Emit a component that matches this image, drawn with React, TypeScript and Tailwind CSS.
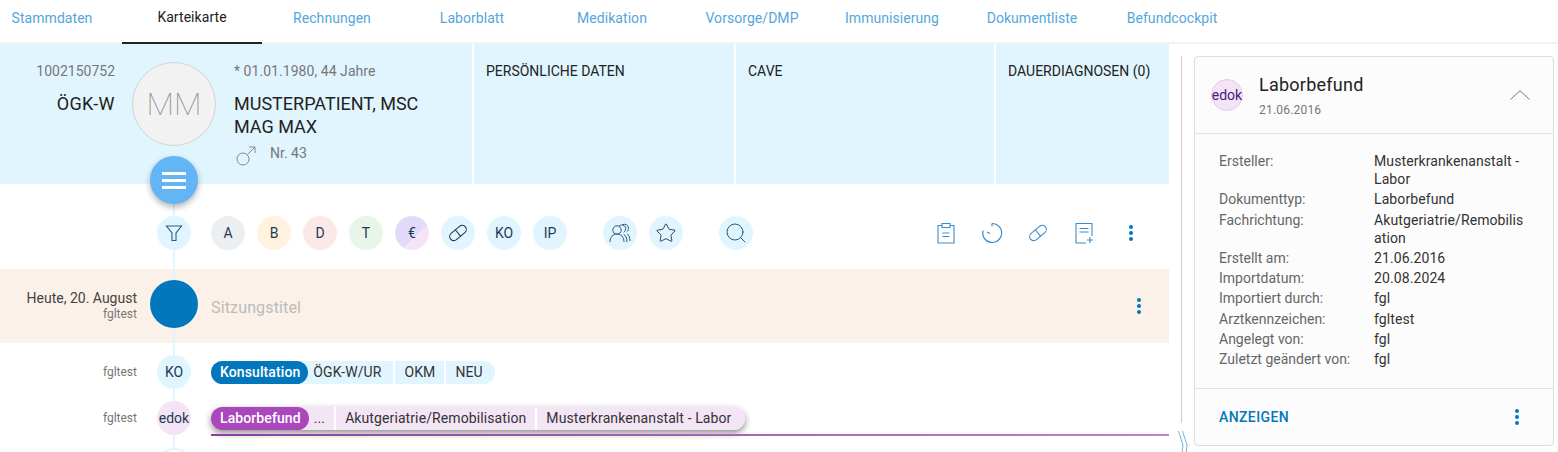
import { Search, Star } from 'lucide-react'

const tabs = ['Stammdaten', 'Karteikarte', 'Rechnungen', 'Laborblatt', 'Medikation', 'Vorsorge/DMP', 'Immunisierung', 'Dokumentliste', 'Befundcockpit']

const details = [
  { label: 'Ersteller:', value: 'Musterkrankenanstalt - Labor' },
  { label: 'Dokumenttyp:', value: 'Laborbefund' },
  { label: 'Fachrichtung:', value: 'Akutgeriatrie/Remobilisation' },
  { label: 'Erstellt am:', value: '21.06.2016' },
  { label: 'Importdatum:', value: '20.08.2024' },
  { label: 'Importiert durch:', value: 'fgl' },
  { label: 'Arztkennzeichen:', value: 'fgltest' },
  { label: 'Angelegt von:', value: 'fgl' },
  { label: 'Zuletzt geändert von:', value: 'fgl' },
]

function Pill({ className = '' }: { className?: string }) {
  return (
    <svg viewBox="0 0 24 24" fill="none" stroke="currentColor" strokeWidth="1.2" className={className}>
      <rect x="1.5" y="7.5" width="21" height="9" rx="4.5" transform="rotate(-40 12 12)" />
      <path d="M8.8 8.2l6.2 7.4" />
    </svg>
  )
}

function Dots() {
  return (
    <div className="flex flex-col items-center gap-[2px]">
      <span className="h-[4px] w-[4px] rounded-full bg-[#0277bd]" />
      <span className="h-[4px] w-[4px] rounded-full bg-[#0277bd]" />
      <span className="h-[4px] w-[4px] rounded-full bg-[#0277bd]" />
    </div>
  )
}

function Circle({ children, className = 'bg-[#e1f5fe]' }: { children?: React.ReactNode; className?: string }) {
  return (
    <div className={`relative z-[2] flex h-[34px] w-[34px] shrink-0 items-center justify-center rounded-full text-[14px] text-[#1d3a55] ${className}`}>
      {children}
    </div>
  )
}

function Chip({ children, className = '' }: { children: React.ReactNode; className?: string }) {
  return <span className={`flex h-[23px] items-center px-[9px] text-[14px] tracking-[0.1px] ${className}`}>{children}</span>
}

export default function App() {
  return (
    <div className="h-[452px] w-[1558px] overflow-hidden bg-white font-['Roboto',sans-serif] text-[14px] text-[#222]">
      {/* Tabs */}
      <nav className="flex h-[44px] border-b-2 border-[#f3f3f3]">
        <div className="-ml-[18px] flex">
          {tabs.map((t) => (
            <div
              key={t}
              className={`flex h-[44px] w-[140px] items-center justify-center pb-[7px] text-[14px] tracking-[0.05px] ${
                t === 'Karteikarte' ? 'border-b-2 border-[#222] text-[#222]' : 'text-[#55a6dc]'
              }`}
            >
              {t}
            </div>
          ))}
        </div>
      </nav>

      <div className="flex">
        {/* Main column */}
        <div className="relative w-[1169px] shrink-0">
          {/* Timeline line */}
          <div className="absolute left-[173px] top-[140px] z-[1] h-[264px] w-[2px] bg-[#e1f5fe]" />

          {/* Patient header */}
          <div className="flex h-[140px] gap-[2px]">
            <div className="relative flex w-[472px] shrink-0 bg-[#e1f5fe]">
              <div className="w-[115px] pt-[19px] text-right">
                <div className="text-[14px] leading-[16px] text-[#777]">1002150752</div>
                <div className="mt-[14px] text-[18px] leading-[22px] tracking-[0.4px] text-[#222]">ÖGK-W</div>
              </div>
              <div className="ml-[17px] mt-[18px] flex h-[84px] w-[84px] items-center justify-center rounded-full border border-[#d4d4d4] bg-[#f2f2f2] text-[32px] font-thin text-[#8a8f96]">
                MM
              </div>
              <div className="ml-[18px] pt-[19px]">
                <div className="text-[14px] leading-[16px] tracking-[0.05px] text-[#777]">* 01.01.1980, 44 Jahre</div>
                <div className="mt-[13px] text-[18px] leading-[23px] text-[#222]">
                  MUSTERPATIENT, MSC
                  <br />
                  MAG MAX
                </div>
                <div className="mt-[7px] flex items-center">
                  <svg viewBox="0 0 22 22" fill="none" stroke="#888" strokeWidth="1" className="ml-[1px] h-[22px] w-[22px]">
                    <circle cx="8" cy="14" r="6" />
                    <path d="M12.5 9.500L20 2M14 2h6v6" />
                  </svg>
                  <span className="-mt-[5px] ml-[13px] text-[14px] text-[#777]">Nr. 43</span>
                </div>
              </div>
            </div>
            <div className="w-[260px] shrink-0 bg-[#e1f5fe] pl-[12px] pt-[19px] text-[14px] leading-[16px]">PERSÖNLICHE DATEN</div>
            <div className="w-[258px] shrink-0 bg-[#e1f5fe] pl-[12px] pt-[19px] text-[14px] leading-[16px]">CAVE</div>
            <div className="w-[173px] shrink-0 bg-[#e1f5fe] pl-[12px] pt-[19px] text-[14px] leading-[16px]">DAUERDIAGNOSEN (0)</div>
          </div>

          {/* Menu button */}
          <div className="absolute left-[150px] top-[112px] z-[2] flex h-[48px] w-[48px] flex-col items-center justify-center gap-[4px] rounded-full bg-[#64b5f6] shadow-[0_3px_6px_rgba(0,0,0,0.3)]">
            <span className="h-[3px] w-[24px] bg-white" />
            <span className="h-[3px] w-[24px] bg-white" />
            <span className="h-[3px] w-[24px] bg-white" />
          </div>

          {/* Toolbar */}
          <div className="flex h-[85px] items-center pl-[157px] pr-[36px] pt-[13px]">
            <Circle>
              <svg viewBox="0 0 20 20" fill="none" stroke="#2a5a80" strokeWidth="1.1" className="h-[20px] w-[20px]">
                <path d="M2.500 3h15l-5.500 7v7.500h-4V10z" />
              </svg>
            </Circle>
            <div className="ml-[20px] flex gap-[12px]">
              <Circle className="bg-[#eceff1]">A</Circle>
              <Circle className="bg-[#fff3e0]">B</Circle>
              <Circle className="bg-[#fbe9e7]">D</Circle>
              <Circle className="bg-[#e8f5e9]">T</Circle>
              <Circle className="bg-[linear-gradient(135deg,#e3daf9_60%,#f3e5f5_60%)]">€</Circle>
              <Circle><Pill className="h-[22px] w-[22px]" /></Circle>
              <Circle>KO</Circle>
              <Circle>IP</Circle>
            </div>
            <div className="ml-[36px] flex gap-[12px]">
              <Circle>
                <svg viewBox="0 0 24 24" fill="none" stroke="#2a5a80" strokeWidth="1" className="h-[24px] w-[24px]">
                  <circle cx="9" cy="9" r="4.200" />
                  <path d="M2 21c0-5 3-8 7-8s7 3 7 8" />
                  <path d="M11 5.200a4 4 0 0 1 6.500 1c.6 2-.3 4-1.800 5M19 21c0-4-1.200-6.500-3.300-7.500" />
                  <path d="M14.500 3.800a4 4 0 0 1 6 3.500c0 1.500-.8 2.800-1.800 3.600M22 20c0-3.500-1-5.500-2.600-7" />
                </svg>
              </Circle>
              <Circle><Star className="h-[22px] w-[22px]" strokeWidth={1} /></Circle>
            </div>
            <div className="ml-[36px]">
              <Circle><Search className="h-[24px] w-[24px] text-[#2a5a80]" strokeWidth={1} /></Circle>
            </div>
            <div className="ml-auto flex items-center gap-[24px] text-[#3c8ccb]">
              <svg viewBox="0 0 22 22" fill="none" stroke="currentColor" strokeWidth="1.1" className="h-[22px] w-[22px]">
                <path d="M7 3.500H3V21H19V3.500H15M7 1.500h8v4H7zM7.500 11h7M7.500 14.500h7" />
              </svg>
              <svg viewBox="0 0 22 22" fill="none" stroke="currentColor" strokeWidth="1.1" className="h-[22px] w-[22px]">
                <path d="M11 1.500a9.500 9.500 0 1 1-9 7M11 1.500v3M6 10l3 1.500" />
              </svg>
              <Pill className="h-[22px] w-[22px]" />
              <svg viewBox="0 0 22 22" fill="none" stroke="currentColor" strokeWidth="1.1" className="h-[22px] w-[22px]">
                <path d="M19 14V1.500H3V21h10M6.500 6.500h9M6.500 10h9M17 15v6M14 18h6" />
              </svg>
              <div className="ml-[10px]"><Dots /></div>
            </div>
          </div>

          {/* Session */}
          <div className="flex h-[74px] items-center bg-[#fbf1e8] pr-[28px]">
            <div className="w-[137px] text-right">
              <div className="text-[14px] leading-[16px] text-[#444]">Heute, 20. August</div>
              <div className="text-[12px] leading-[16px] text-[#777]">fgltest</div>
            </div>
            <div className="relative z-[2] -mt-[4px] ml-[13px] h-[48px] w-[48px] rounded-full bg-[#0277bd]" />
            <div className="ml-[13px] flex-1 pt-[4px] text-[16px] tracking-[0.15px] text-[#bbb]">Sitzungstitel</div>
            <Dots />
          </div>

          {/* Timeline rows */}
          <div className="flex pt-[12px]">
            <div className="flex h-[34px] w-[137px] items-center justify-end text-[12px] text-[#777]">fgltest</div>
            <div className="ml-[20px]"><Circle>KO</Circle></div>
            <div className="ml-[20px] flex items-start gap-[2px] pt-[6px] text-[#333]">
              <div className="flex rounded-l-full bg-[#e1f5fe]">
                <Chip className="rounded-full bg-[#0277bd] !pr-[8px] font-medium text-white">Konsultation</Chip>
                <Chip className="!pl-[5px] !pr-[12px]">ÖGK-W/UR</Chip>
              </div>
              <Chip className="bg-[#e1f5fe]">OKM</Chip>
              <Chip className="rounded-r-full bg-[#e1f5fe] !pr-[12px]">NEU</Chip>
            </div>
          </div>
          <div className="flex pt-[12px]">
            <div className="flex h-[34px] w-[137px] items-center justify-end text-[12px] text-[#777]">fgltest</div>
            <div className="ml-[20px]"><Circle className="bg-[#f3e5f5]">edok</Circle></div>
            <div className="ml-[20px] flex flex-1 flex-col items-start pt-[6px] text-[#333]">
              <div className="flex gap-[2px] rounded-full bg-white shadow-[0_3px_7px_rgba(0,0,0,0.45)]">
                <div className="flex rounded-l-full bg-[#f3e5f5]">
                  <Chip className="rounded-full bg-[#ab47bc] !pr-[8px] font-medium text-white">Laborbefund</Chip>
                  <Chip className="!pl-[5px]">...</Chip>
                </div>
                <Chip className="bg-[#f3e5f5]">Akutgeriatrie/Remobilisation</Chip>
                <Chip className="rounded-r-full bg-[#f3e5f5] !pr-[14px]">Musterkrankenanstalt - Labor</Chip>
              </div>
              <div className="mt-[4px] h-[2px] w-full bg-gradient-to-r from-[#8e3f9e] to-[#c47fd0]" />
            </div>
          </div>
          <div className="relative z-[2] ml-[157px] mt-[12px] h-[34px] w-[34px] rounded-full border-2 border-[#e1f5fe] bg-white" />
        </div>

        {/* Details side */}
        <div className="relative flex-1 pl-[25px] pt-[12px]">
          <div className="absolute left-[12px] top-[12px] h-[367px] w-[1px] bg-[#ccc]" />
          <svg viewBox="0 0 12 22" fill="none" stroke="#5a9fd4" strokeWidth="0.8" className="absolute left-[9px] top-[387px] h-[22px] w-[12px]">
            <path d="M0.500 0l4.500 14-1 8M4.500 0l4.500 14-1 8" />
          </svg>
          <div className="h-[390px] w-[360px] rounded-[4px] border border-[#ddd] bg-[#fcfcfc]">
            <div className="flex h-[77px] items-center border-b border-[#e2e2e2] pl-[16px] pr-[23px]">
              <div className="flex h-[32px] w-[32px] items-center justify-center rounded-full border border-[#e8c9ee] bg-[#f3e5f5] text-[14px] text-[#4a1a80]">
                edok
              </div>
              <div className="ml-[16px] flex-1">
                <div className="text-[18px] leading-[24px] tracking-[0.25px] text-[#222]">Laborbefund</div>
                <div className="mt-[5px] text-[12px] leading-[16px] tracking-[0.2px] text-[#777]">21.06.2016</div>
              </div>
              <svg viewBox="0 0 20 10" fill="none" stroke="#4a80b5" strokeWidth="1" className="h-[10px] w-[20px]">
                <path d="M0.500 9.500L10 0.700l9.500 8.800" />
              </svg>
            </div>
            <div className="h-[254px] pl-[24px] pt-[18px] text-[14px] leading-[18px]">
              {details.map((d) => (
                <div key={d.label} className="mb-[2.3px] flex">
                  <div className="w-[155px] shrink-0 text-[#666]">{d.label}</div>
                  <div className={`w-[150px] tracking-[0.1px] text-[#333] ${d.label === 'Fachrichtung:' ? 'break-all' : ''}`}>{d.value}</div>
                </div>
              ))}
            </div>
            <div className="flex h-[56px] items-center justify-between border-t border-[#e2e2e2] pl-[24px] pr-[34px]">
              <span className="pt-[1px] text-[14px] font-medium tracking-[0.4px] text-[#0277bd]">ANZEIGEN</span>
              <Dots />
            </div>
          </div>
        </div>
      </div>
    </div>
  )
}
